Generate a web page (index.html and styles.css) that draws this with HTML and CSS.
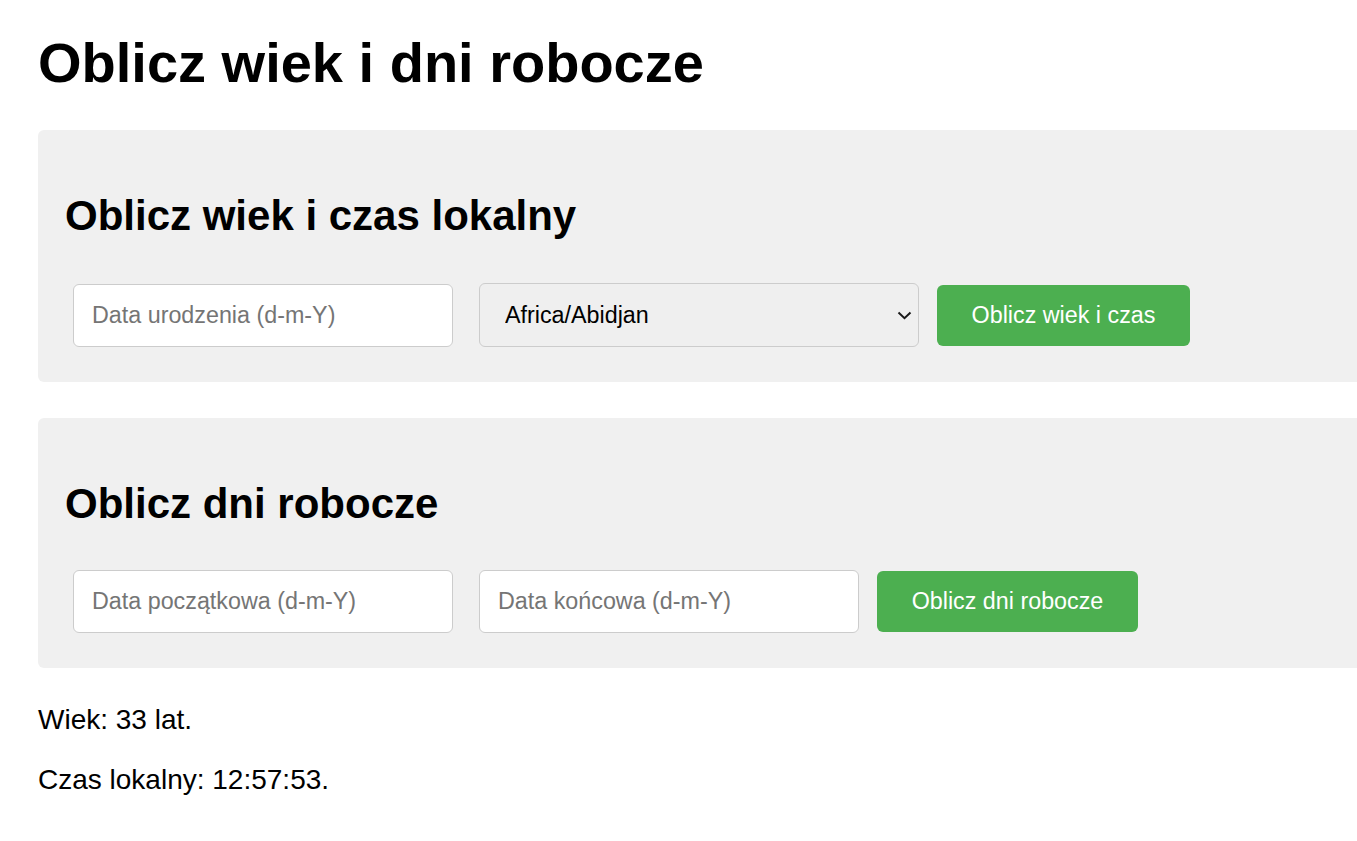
FILE: index.html
```html
<!DOCTYPE html>
<html lang="pl">
<head>
<meta charset="utf-8">
<title>Oblicz wiek i dni robocze</title>
<link rel="stylesheet" href="styles.css">
</head>
<body>
<h1 class="title">Oblicz wiek i dni robocze</h1>

<section class="card">
  <h2 class="card-title">Oblicz wiek i czas lokalny</h2>
  <div class="row">
    <input class="field" type="text" placeholder="Data urodzenia (d-m-Y)">
    <div class="select-wrap">
      <select class="select">
        <option>Africa/Abidjan</option>
      </select>
      <svg class="chevron" width="15" height="9" viewBox="0 0 15 9"><path d="M1.5 1.5 L7.5 7.2 L13.5 1.5" fill="none" stroke="#1a1a1a" stroke-width="2"/></svg>
    </div>
    <button class="btn btn-age">Oblicz wiek i czas</button>
  </div>
</section>

<section class="card">
  <h2 class="card-title">Oblicz dni robocze</h2>
  <div class="row row-days">
    <input class="field" type="text" placeholder="Data początkowa (d-m-Y)">
    <input class="field field-end" type="text" placeholder="Data końcowa (d-m-Y)">
    <button class="btn btn-days">Oblicz dni robocze</button>
  </div>
</section>

<p class="result">Wiek: 33 lat.</p>
<p class="result">Czas lokalny: 12:57:53.</p>
</body>
</html>
```

FILE: styles.css
```css
html, body {
  overflow-x: hidden;
}
body {
  margin: 0;
  padding: 0 38px;
  font-family: "Liberation Sans", Arial, sans-serif;
  color: #000;
  background: #fff;
}
.title {
  font-size: 56px;
  line-height: 64px;
  font-weight: bold;
  margin: 31px 0 35px;
}
.card {
  background: #f0f0f0;
  border-radius: 6px;
  width: 100%;
  padding: 0 27px 35px;
  margin-bottom: 36px;
}
.card-title {
  font-size: 42px;
  line-height: 48px;
  font-weight: bold;
  margin: 0;
  padding-top: 62px;
}
.row {
  display: flex;
  align-items: center;
  margin-top: 43px;
  padding-left: 8px;
}
.row-days {
  margin-top: 42px;
}
.field {
  box-sizing: border-box;
  width: 380px;
  height: 63px;
  border: 1px solid #ccc;
  border-radius: 6px;
  background: #fff;
  padding: 0 18px;
  font-family: "Liberation Sans", Arial, sans-serif;
  font-size: 23.3px;
  color: #000;
  margin: 0;
}
.field::placeholder {
  color: #757575;
}
.field-end {
  margin-left: 26px;
}
.select-wrap {
  position: relative;
  margin-left: 26px;
}
.select {
  box-sizing: border-box;
  width: 440px;
  height: 64px;
  border: 1px solid #ccc;
  border-radius: 6px;
  background: #efefef;
  padding: 0 22px 0 25px;
  font-family: "Liberation Sans", Arial, sans-serif;
  font-size: 23.3px;
  color: #000;
  appearance: none;
  -webkit-appearance: none;
  display: block;
  margin: 0;
}
.chevron {
  position: absolute;
  right: 7px;
  top: 28px;
  pointer-events: none;
}
.btn {
  box-sizing: border-box;
  height: 61px;
  border: none;
  border-radius: 6px;
  background: #4caf50;
  color: #fff;
  font-family: "Liberation Sans", Arial, sans-serif;
  font-size: 23.3px;
  padding: 0 30px;
  margin-left: 18px;
  cursor: pointer;
}
.btn-age {
  width: 253px;
}
.btn-days {
  width: 261px;
}
.result {
  font-size: 28px;
  line-height: 32px;
  margin: 28px 0;
}
```
